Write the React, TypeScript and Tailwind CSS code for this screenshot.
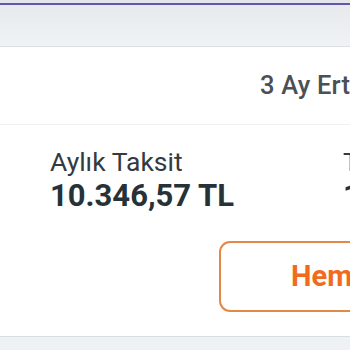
import React from "react";

export default function App() {
  return (
    <div className="w-[350px] h-[350px] overflow-hidden bg-white" style={{ fontFamily: "Roboto, 'Noto Sans', sans-serif" }}>
      <div className="w-[760px]">
        <div className="h-[3px] bg-[#e4e4ec]" />
        <div className="h-[2px] bg-[#5f58aa]" />
        <div className="h-[42px] bg-gradient-to-b from-[#e7eaec] to-[#f0f3f5] border-b border-[#dcdfe2]" />
        <div className="h-[78px] border-b border-[#f0f0f0] flex items-center pl-[260px]">
          <span className="text-[25.5px] font-medium text-[#4a5056] leading-none whitespace-nowrap tracking-[0.2px]">3 Ay Erteleme</span>
        </div>
        <div className="pt-[22px] pl-[50px] flex">
          <div className="w-[293px] flex flex-col">
            <span className="text-[26.5px] leading-[30px] text-[#333a40]">Aylık Taksit</span>
            <span className="mt-[1px] text-[31px] leading-[36px] font-bold text-[#263238]">10.346,57 TL</span>
          </div>
          <div className="flex flex-col">
            <span className="text-[26.5px] leading-[30px] text-[#333a40]">Toplam Tutar</span>
            <span className="mt-[1px] text-[31px] leading-[36px] font-bold text-[#263238]">124.158,84 TL</span>
          </div>
        </div>
        <div className="pl-[219px] pt-[27px] pb-[24px]">
          <div className="w-[300px] h-[71px] rounded-[11px] border-2 border-[#e48848] flex items-center pl-[70px]">
            <span className="text-[29px] font-bold text-[#f26b1d] leading-none">Hemen Başvur</span>
          </div>
        </div>
        <div className="h-[20px] bg-[#eef2f4] border-t border-[#d8dde0]" />
      </div>
    </div>
  );
}
